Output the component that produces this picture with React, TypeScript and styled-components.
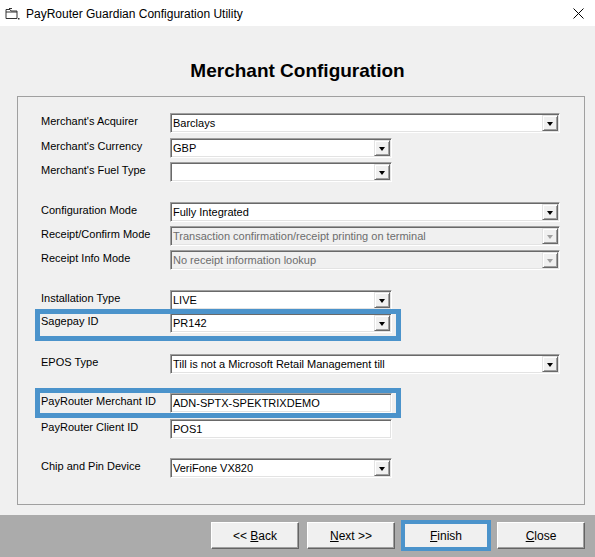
import React from "react";
import styled, { createGlobalStyle } from "styled-components";

const Global = createGlobalStyle`
  html, body { margin: 0; padding: 0; background: #f0f0f0; }
  body { font-family: "Liberation Sans", Arial, sans-serif; font-size: 11px; color: #000; }
  * { box-sizing: border-box; }
`;

const Window = styled.div`
  width: 595px;
  height: 557px;
  display: flex;
  flex-direction: column;
  background: #f0f0f0;
  overflow: hidden;
`;

const TitleBar = styled.div`
  height: 26px;
  background: #fff;
  display: flex;
  align-items: center;
  padding: 0 11px 0 5px;
  gap: 6px;
`;

const TitleText = styled.div`
  flex: 1;
  font-family: "Liberation Sans", Arial, sans-serif;
  font-size: 12px;
  color: #000;
  padding-top: 1px;
`;

const Heading = styled.h1`
  margin: 0;
  padding: 34px 0 14px;
  font-family: "Liberation Sans", Arial, sans-serif;
  font-weight: bold;
  font-size: 19px;
  line-height: 22px;
  text-align: center;
`;

const Panel = styled.div`
  margin: 0 10px 0 17px;
  border: 1px solid #a0a0a0;
  padding: 16px 0 26px 23px;
  display: flex;
  flex-direction: column;
`;

const Row = styled.div<{ $gap: number }>`
  position: relative;
  display: flex;
  align-items: flex-start;
  height: 20px;
  margin-top: ${(p) => p.$gap}px;
`;

const Label = styled.div`
  width: 129px;
  flex: none;
  line-height: 14px;
  padding-top: 1px;
  white-space: nowrap;
`;

const Sunken = styled.div<{ $w: number; $disabled?: boolean }>`
  position: relative;
  width: ${(p) => p.$w}px;
  height: 20px;
  border: 1px solid;
  border-color: #a0a0a0 #ffffff #ffffff #a0a0a0;
  box-shadow: inset 1px 1px 0 #696969, inset -1px -1px 0 #e3e3e3;
  background: ${(p) => (p.$disabled ? "#f0f0f0" : "#ffffff")};
  color: ${(p) => (p.$disabled ? "#6d6d6d" : "#000")};
  padding: 0 20px 0 2px;
  display: flex;
  align-items: center;
  white-space: nowrap;
  overflow: hidden;
  font-size: 11px;
`;

const ArrowButton = styled.div<{ $disabled?: boolean }>`
  position: absolute;
  right: 1px;
  top: 1px;
  bottom: 1px;
  width: 16px;
  background: #f0f0f0;
  border: 1px solid;
  border-color: #e3e3e3 #696969 #696969 #e3e3e3;
  box-shadow: inset 1px 1px 0 #ffffff, inset -1px -1px 0 #a0a0a0;
  display: flex;
  align-items: center;
  justify-content: center;
  &::after {
    content: "";
    width: 0;
    height: 0;
    margin-top: 1px;
    border-left: 3.5px solid transparent;
    border-right: 3.5px solid transparent;
    border-top: 4px solid ${(p) => (p.$disabled ? "#a0a0a0" : "#000")};
  }
`;

const Highlight = styled.div<{ $top: number; $h: number }>`
  position: absolute;
  left: -6px;
  top: ${(p) => p.$top}px;
  width: 366px;
  height: ${(p) => p.$h}px;
  border: 5px solid #4b93cb;
  pointer-events: none;
`;

const BottomBar = styled.div`
  margin-top: 10px;
  flex: 1;
  background: #ababab;
  display: flex;
  justify-content: flex-end;
  align-items: flex-start;
  padding: 7px 10px 0 0;
  gap: 8px;
`;

const Button = styled.button<{ $highlight?: boolean }>`
  width: ${(p) => (p.$highlight ? 90 : 88)}px;
  height: ${(p) => (p.$highlight ? 31 : 27)}px;
  margin: ${(p) => (p.$highlight ? "-2px -2px 0 -2px" : "0")};
  font-family: "Liberation Sans", Arial, sans-serif;
  font-size: 12px;
  color: #000;
  background: #f0f0f0;
  border: ${(p) => (p.$highlight ? "4px solid #4b93cb" : "1px solid")};
  border-color: ${(p) => (p.$highlight ? "#4b93cb" : "#ffffff #646464 #646464 #ffffff")};
  box-shadow: ${(p) => (p.$highlight ? "none" : "inset -1px -1px 0 #a0a0a0")};
  padding: 0;
  u { text-decoration: underline; }
`;

type ComboProps = { w: number; value: string; disabled?: boolean };
const Combo = ({ w, value, disabled }: ComboProps) => (
  <Sunken $w={w} $disabled={disabled}>
    {value}
    <ArrowButton $disabled={disabled} />
  </Sunken>
);

const TextBox = ({ w, value }: { w: number; value: string }) => (
  <Sunken $w={w} style={{ paddingRight: 2 }}>
    {value}
  </Sunken>
);

const WIDE = 390;
const NARROW = 222;

const AppIcon = () => (
  <svg width="15" height="13" viewBox="0 0 15 13" fill="none">
    <path d="M1 2.5h4l1 1.5h6v7.5H1z" stroke="#333" strokeWidth="1" />
    <path d="M1 5h11" stroke="#333" strokeWidth="1" />
    <path d="M4 1.5h3" stroke="#333" strokeWidth="1" />
    <rect x="13" y="11" width="1.5" height="1.5" fill="#333" />
  </svg>
);

const CloseIcon = () => (
  <svg width="11" height="11" viewBox="0 0 11 11">
    <path d="M0.5 0.5L10.5 10.5M10.5 0.5L0.5 10.5" stroke="#000" strokeWidth="1" />
  </svg>
);

export default function App() {
  return (
    <Window>
      <Global />
      <TitleBar>
        <AppIcon />
        <TitleText>PayRouter Guardian Configuration Utility</TitleText>
        <CloseIcon />
      </TitleBar>
      <Heading>Merchant Configuration</Heading>
      <Panel>
        <Row $gap={0}>
          <Label>Merchant's Acquirer</Label>
          <Combo w={WIDE} value="Barclays" />
        </Row>
        <Row $gap={5}>
          <Label>Merchant's Currency</Label>
          <Combo w={NARROW} value="GBP" />
        </Row>
        <Row $gap={4}>
          <Label>Merchant's Fuel Type</Label>
          <Combo w={NARROW} value="" />
        </Row>
        <Row $gap={20}>
          <Label>Configuration Mode</Label>
          <Combo w={WIDE} value="Fully Integrated" />
        </Row>
        <Row $gap={4}>
          <Label>Receipt/Confirm Mode</Label>
          <Combo w={WIDE} value="Transaction confirmation/receipt printing on terminal" disabled />
        </Row>
        <Row $gap={4}>
          <Label>Receipt Info Mode</Label>
          <Combo w={WIDE} value="No receipt information lookup" disabled />
        </Row>
        <Row $gap={20}>
          <Label>Installation Type</Label>
          <Combo w={NARROW} value="LIVE" />
        </Row>
        <Row $gap={3}>
          <Label>Sagepay ID</Label>
          <Combo w={NARROW} value="PR142" />
          <Highlight $top={-4} $h={32} />
        </Row>
        <Row $gap={21}>
          <Label>EPOS Type</Label>
          <Combo w={WIDE} value="Till is not a Microsoft Retail Management till" />
        </Row>
        <Row $gap={19}>
          <Label>PayRouter Merchant ID</Label>
          <TextBox w={NARROW} value="ADN-SPTX-SPEKTRIXDEMO" />
          <Highlight $top={-5} $h={30} />
        </Row>
        <Row $gap={6}>
          <Label>PayRouter Client ID</Label>
          <TextBox w={NARROW} value="POS1" />
        </Row>
        <Row $gap={19}>
          <Label>Chip and Pin Device</Label>
          <Combo w={NARROW} value="VeriFone VX820" />
        </Row>
      </Panel>
      <BottomBar>
        <Button>
          &lt;&lt; <u>B</u>ack
        </Button>
        <Button>
          <u>N</u>ext &gt;&gt;
        </Button>
        <Button $highlight>
          <u>F</u>inish
        </Button>
        <Button>
          <u>C</u>lose
        </Button>
      </BottomBar>
    </Window>
  );
}
